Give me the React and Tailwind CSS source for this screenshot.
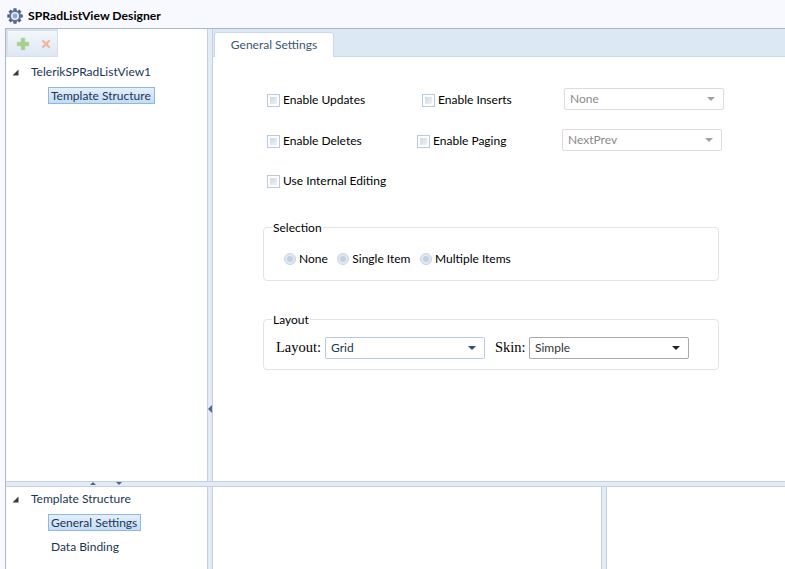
import { useState } from 'react';

const uiFont = "font-['Lato','Noto_Sans',sans-serif]";

function Gear() {
  const teeth = [0, 45, 90, 135, 180, 225, 270, 315];
  return (
    <svg width="16" height="16" viewBox="0 0 16 16">
      {teeth.map((a) => (
        <rect key={a} x="6.4" y="0.3" width="3.2" height="3.4" fill="#4d5f80" transform={`rotate(${a} 8 8)`} />
      ))}
      <circle cx="8" cy="8" r="6" fill="#5f7396" />
      <circle cx="8" cy="8" r="4" fill="#e6edf7" />
      <circle cx="8" cy="8" r="2.4" fill="#8fa8cc" />
    </svg>
  );
}

function Plus() {
  return (
    <svg width="14" height="14" viewBox="0 0 14 14">
      <path d="M5 1h4v4h4v4H9v4H5V9H1V5h4z" fill="#a5cf8f" stroke="#c0dcb0" strokeWidth="0.6" />
    </svg>
  );
}

function Cross() {
  return (
    <svg width="10" height="10" viewBox="0 0 10 10">
      <path d="M2 0.5L5 3.3 8 0.5 9.5 2 6.7 5 9.5 8 8 9.5 5 6.7 2 9.5 0.5 8 3.3 5 0.5 2z" fill="#efb99c" />
    </svg>
  );
}

function Expander() {
  return (
    <svg width="7" height="7" viewBox="0 0 7 7" className="shrink-0">
      <path d="M6.5 0.5V6.5H0.5z" fill="#3a3a3a" />
    </svg>
  );
}

function TreeItem({ children, selected }) {
  return (
    <div
      className={`flex items-center w-fit h-[17px] pl-[2px] pr-[3px] text-xs text-[#1a3553] border ${
        selected ? 'border-[#8fb8de] bg-gradient-to-b from-[#e4effb] to-[#c5dcf6]' : 'border-transparent'
      }`}
    >
      {children}
    </div>
  );
}

function Check({ label, className = '' }) {
  return (
    <label className={`flex items-center gap-[3px] text-xs text-black ${className}`}>
      <span className="w-[13px] h-[13px] border border-[#b4cbe0] p-[2px] bg-white shrink-0">
        <span className="block w-full h-full bg-gradient-to-br from-[#cfd8e6] to-[#eef2f8]" />
      </span>
      {label}
    </label>
  );
}

function Radio({ label }) {
  return (
    <label className="flex items-center gap-[3px] text-xs text-black">
      <span className="w-[12px] h-[12px] rounded-full border border-[#c5d3e2] bg-[#dfe8f3] p-[2px] shrink-0">
        <span className="block w-full h-full rounded-full bg-[#c3d0e0]" />
      </span>
      {label}
    </label>
  );
}

function Select({ value, className = '', tone = 'disabled' }) {
  const styles = {
    disabled: 'border-[#dcdcdc] text-[#8a8a8a]',
    blue: 'border-[#b7c9df] text-[#1a3553]',
    gray: 'border-[#a8a8a8] text-[#333333]',
  };
  const arrow = tone === 'disabled' ? 'border-t-[#a0a0a0]' : tone === 'blue' ? 'border-t-[#2c4a6e]' : 'border-t-[#222222]';
  return (
    <div className={`h-[22px] flex items-center justify-between pl-[5px] pr-[8px] border rounded-[2px] bg-white text-xs ${styles[tone]} ${className}`}>
      <span>{value}</span>
      <span className={`w-0 h-0 border-x-[4px] border-x-transparent border-t-[4px] ${arrow}`} />
    </div>
  );
}

function Group({ title, className = '', children }) {
  return (
    <fieldset className={`mx-[50px] w-[456px] border border-[#e4e4e4] rounded-[4px] px-[11px] ${className}`}>
      <legend className="px-[1px] pt-[2px] ml-[-3px] text-xs leading-[16px] text-black">{title}</legend>
      {children}
    </fieldset>
  );
}

function Splitter({ vertical, children, className = '' }) {
  return (
    <div
      className={`relative shrink-0 bg-[#e3ebf7] border-[#c6cfe0] ${
        vertical ? 'w-[6px] border-x' : 'h-[6px] border-y'
      } ${className}`}
    >
      {children}
    </div>
  );
}

export default function App() {
  const [tab] = useState('General Settings');

  return (
    <div className={`w-[785px] h-[569px] overflow-hidden flex flex-col bg-[#f8f9fe] ${uiFont}`}>
      {/* Title */}
      <div className="h-[28px] flex items-center gap-[5px] pl-[7px] pt-[4px] shrink-0 text-[12.2px] font-bold text-black">
        <Gear />
        SPRadListView Designer
      </div>

      <div className="flex-1 min-h-0 flex flex-col ml-[5px] border-t border-l border-[#a9b7c9] bg-white">
        {/* Top */}
        <div className="h-[452px] flex shrink-0">
          <div className="w-[201px] shrink-0 bg-white">
            <div className="w-[52px] h-[28px] flex items-center gap-[11px] pl-[8px] border border-[#d6e0ee] border-t-2 border-l-2 bg-gradient-to-b from-[#f4f7fc] to-[#dde7f5]">
              <Plus />
              <Cross />
            </div>
            <div className="flex items-center gap-[12px] pl-[6px] mt-[6px] h-[18px] text-xs text-[#1a3553]">
              <Expander />
              TelerikSPRadListView1
            </div>
            <div className="pl-[42px] mt-[6px]">
              <TreeItem selected>Template Structure</TreeItem>
            </div>
          </div>

          <Splitter vertical>
            <span className="absolute left-[0px] top-[376px] w-0 h-0 border-y-[4px] border-y-transparent border-r-[4px] border-r-[#4a6a8e]" />
          </Splitter>

          <div className="flex-1 min-w-0 flex flex-col bg-white">
            <div className="h-[28px] shrink-0 flex items-end pt-[3px] pl-[1px] bg-[#dde8f5] border-b border-[#c9d9ec]">
              <div className="h-[25px] w-[120px] -mb-px flex items-center justify-center bg-white border border-b-0 border-[#c9d9ec] rounded-t-[3px] text-xs text-[#3a556f]">
                {tab}
              </div>
            </div>

            {/* General settings form */}
            <div className="pt-[32px]">
              <div className="flex items-center h-[22px] pl-[54px]">
                <Check label="Enable Updates" className="w-[155px]" />
                <Check label="Enable Inserts" className="w-[142px]" />
                <Select value="None" className="w-[160px] mb-[2px]" />
              </div>
              <div className="flex items-center h-[22px] pl-[54px] mt-[19px]">
                <Check label="Enable Deletes" className="w-[150px]" />
                <Check label="Enable Paging" className="w-[145px]" />
                <Select value="NextPrev" className="w-[160px] mb-[2px]" />
              </div>
              <div className="flex items-center h-[22px] pl-[54px] mt-[18px]">
                <Check label="Use Internal Editing" />
              </div>

              <Group title="Selection" className="mt-[26px] h-[63px]">
                <div className="flex items-center gap-[9.5px] pl-[9px] pt-[15px]">
                  <Radio label="None" />
                  <Radio label="Single Item" />
                  <Radio label="Multiple Items" />
                </div>
              </Group>

              <Group title="Layout" className="mt-[29px] h-[60px]">
                <div className="flex items-center pt-[9px] font-['Liberation_Serif',serif] text-[14.5px] text-black">
                  <span className="ml-[1px] w-[49px]">Layout:</span>
                  <Select value="Grid" tone="blue" className={`w-[160px] ${uiFont}`} />
                  <span className="ml-[10px] w-[34px]">Skin:</span>
                  <Select value="Simple" tone="gray" className={`w-[160px] ${uiFont}`} />
                </div>
              </Group>
            </div>
          </div>
        </div>

        <Splitter>
          <span className="absolute left-[84px] top-0 w-0 h-0 border-x-[3px] border-x-transparent border-b-[3px] border-b-[#4a6a8e]" />
          <span className="absolute left-[110px] top-0 w-0 h-0 border-x-[3px] border-x-transparent border-t-[3px] border-t-[#4a6a8e]" />
        </Splitter>

        {/* Bottom */}
        <div className="flex-1 min-h-0 flex">
          <div className="w-[201px] shrink-0">
            <div className="flex items-center gap-[12px] pl-[6px] mt-[3px] h-[18px] text-xs text-[#1a3553]">
              <Expander />
              Template Structure
            </div>
            <div className="pl-[42px] mt-[6px]">
              <TreeItem selected>General Settings</TreeItem>
            </div>
            <div className="pl-[42px] mt-[7px]">
              <TreeItem>Data Binding</TreeItem>
            </div>
          </div>
          <Splitter vertical />
          <div className="w-[388px] shrink-0" />
          <Splitter vertical />
          <div className="flex-1" />
        </div>
      </div>
    </div>
  );
}
